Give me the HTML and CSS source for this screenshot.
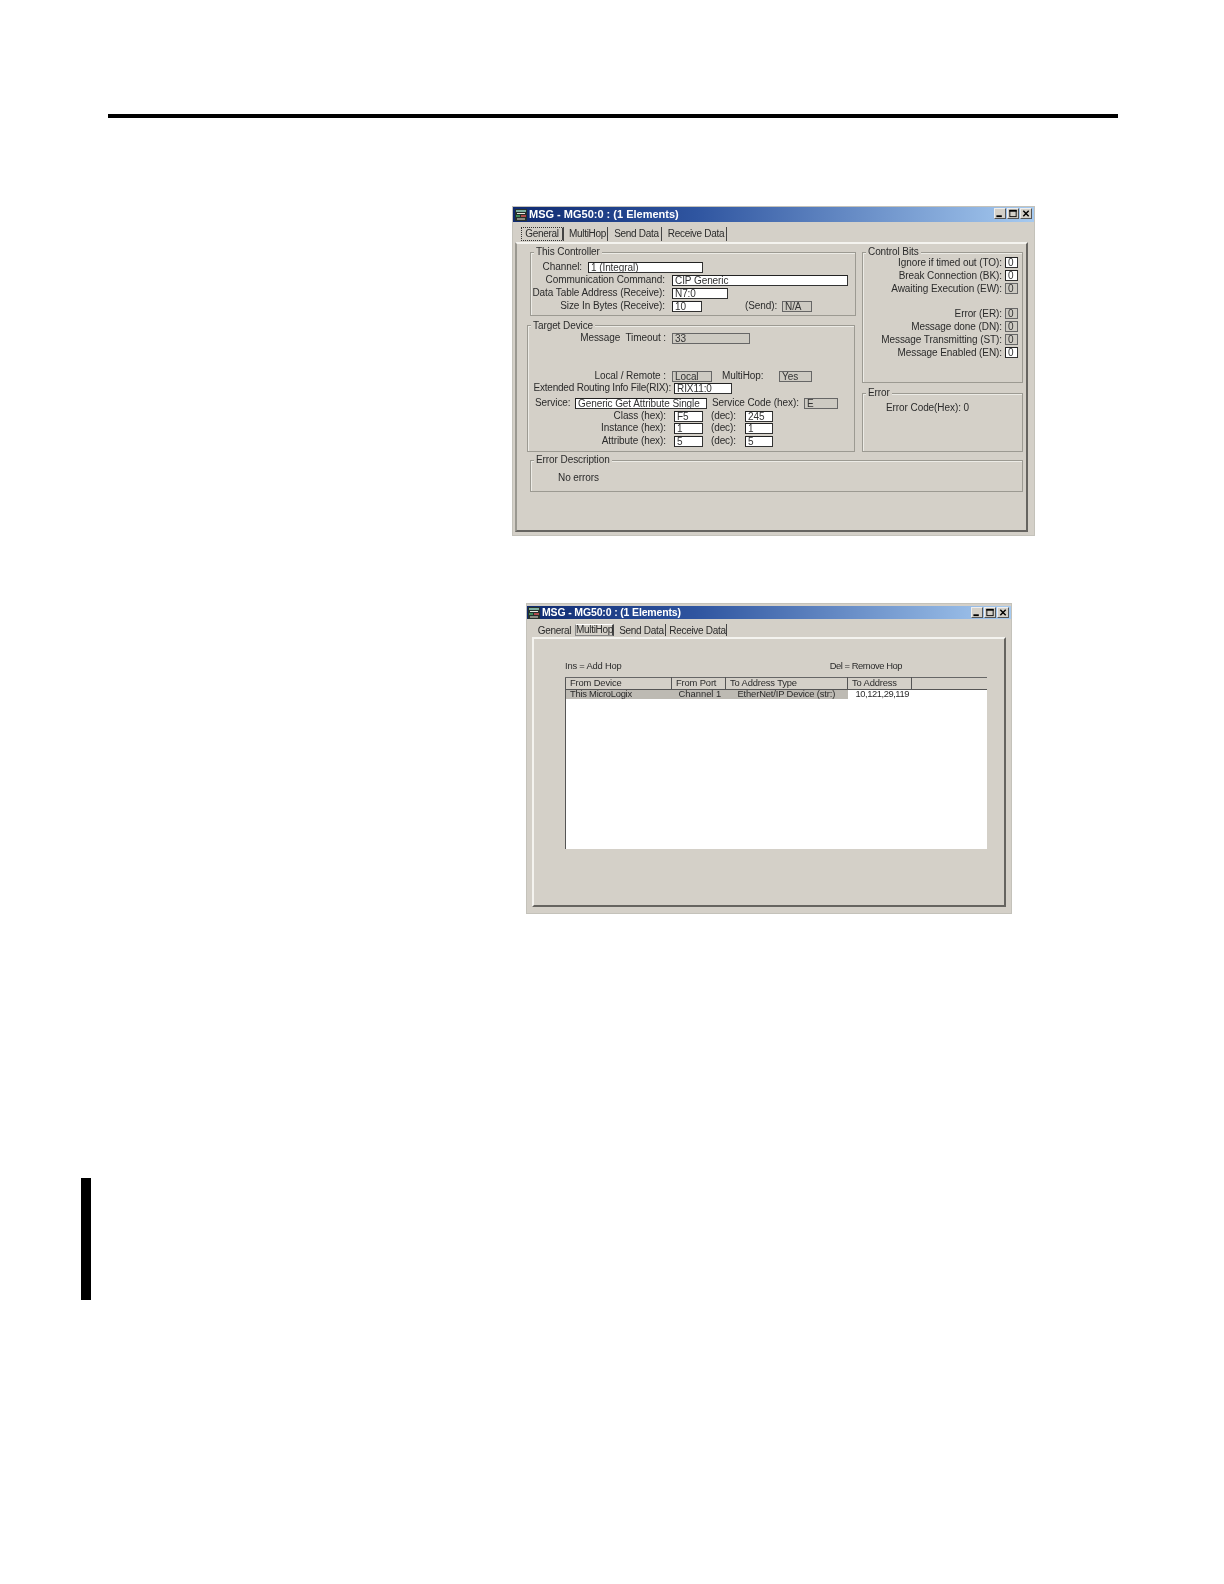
FILE: index.html
```html
<!DOCTYPE html>
<html lang="en">
<head>
<meta charset="utf-8">
<title>MSG - MG50:0</title>
<link rel="stylesheet" href="styles.css">
</head>
<body>
<div class="page">
  <div class="rule"></div>

  <section class="window win-general">
    <header class="titlebar">
      <svg class="app-icon" viewBox="0 0 12 12"><rect width="12" height="12" fill="#26302c"/><rect x="1" y="1" width="10" height="2" fill="#7fb0a0"/><rect x="2" y="4" width="8" height="1" fill="#e8e8e0"/><rect x="1" y="6" width="4" height="2" fill="#3f8a5a"/><rect x="6" y="6" width="5" height="2" fill="#b04a4a"/><rect x="2" y="9" width="8" height="2" fill="#8a8a80"/></svg>
      <span class="title-text">MSG - MG50:0 : (1 Elements)</span>
      <span class="controls">
        <span class="ctl"><svg viewBox="0 0 10 10"><rect x="1" y="7" width="6" height="2" fill="#000"/></svg></span>
        <span class="ctl"><svg viewBox="0 0 10 10"><rect x="1.5" y="1.5" width="7" height="7" fill="none" stroke="#000"/><rect x="1" y="1" width="8" height="2" fill="#000"/></svg></span>
        <span class="ctl ctl-close"><svg viewBox="0 0 10 10"><path d="M2 2l6 6M8 2l-6 6" stroke="#000" stroke-width="1.6" fill="none"/></svg></span>
      </span>
    </header>
    <nav class="tabs tabs-general">
      <span class="tab tab-focus t-gen">General</span>
      <span class="tab t-mh">MultiHop</span>
      <span class="tab t-send">Send Data</span>
      <span class="tab t-recv">Receive Data</span>
    </nav>
    <div class="panel panel-general">
      <div class="columns">
        <div class="col-left">
          <div class="group g-controller">
            <span class="legend">This Controller</span>
            <div class="row"><span class="lab w50 mr6">Channel:</span><span class="field f115">1 (Integral)</span></div>
            <div class="row"><span class="lab w133 mr7">Communication Command:</span><span class="field f176">CIP Generic</span></div>
            <div class="row"><span class="lab w133 mr7">Data Table Address (Receive):</span><span class="field f56">N7:0</span></div>
            <div class="row"><span class="lab w133 mr7">Size In Bytes (Receive):</span><span class="field f30">10</span><span class="lab w28 ml43">(Send):</span><span class="field off f30 ml9">N/A</span></div>
          </div>
          <div class="group g-target">
            <span class="legend">Target Device</span>
            <div class="row"><span class="lab w137 mr6">Message  Timeout :</span><span class="field off f78">33</span></div>
            <div class="row mt26"><span class="lab w137 mr6">Local / Remote :</span><span class="field off f40">Local</span><span class="lab w40 ml10">MultiHop:</span><span class="field off f33 ml17">Yes</span></div>
            <div class="row"><span class="lab w142 mr3 tight">Extended Routing Info File(RIX):</span><span class="field f58">RIX11:0</span></div>
            <div class="row mt3"><span class="lab w34 ml6 mr6">Service:</span><span class="field f132">Generic Get Attribute Single</span><span class="lab w86 ml5">Service Code (hex):</span><span class="field off f34 ml6">E</span></div>
            <div class="row mt1"><span class="lab w137 mr8">Class (hex):</span><span class="field f29">F5</span><span class="lab w28 ml5">(dec):</span><span class="field f28 ml9">245</span></div>
            <div class="row"><span class="lab w137 mr8">Instance (hex):</span><span class="field f29">1</span><span class="lab w28 ml5">(dec):</span><span class="field f28 ml9">1</span></div>
            <div class="row mt1"><span class="lab w137 mr8">Attribute (hex):</span><span class="field f29">5</span><span class="lab w28 ml5">(dec):</span><span class="field f28 ml9">5</span></div>
          </div>
        </div>
        <div class="col-right">
          <div class="group g-bits">
            <span class="legend">Control Bits</span>
            <div class="bit"><span>Ignore if timed out (TO):</span><span class="field f13">0</span></div>
            <div class="bit"><span>Break Connection (BK):</span><span class="field f13">0</span></div>
            <div class="bit"><span>Awaiting Execution (EW):</span><span class="field off f13">0</span></div>
            <div class="bit bit-gap"><span>Error (ER):</span><span class="field off f13">0</span></div>
            <div class="bit"><span>Message done (DN):</span><span class="field off f13">0</span></div>
            <div class="bit"><span>Message Transmitting (ST):</span><span class="field off f13">0</span></div>
            <div class="bit"><span>Message Enabled (EN):</span><span class="field f13">0</span></div>
          </div>
          <div class="group g-error">
            <span class="legend">Error</span>
            <p class="note note-code">Error Code(Hex): 0</p>
          </div>
        </div>
      </div>
      <div class="group g-desc">
        <span class="legend">Error Description</span>
        <p class="note note-desc">No errors</p>
      </div>
    </div>
  </section>

  <section class="window win-hop">
    <header class="titlebar">
      <svg class="app-icon" viewBox="0 0 12 12"><rect width="12" height="12" fill="#26302c"/><rect x="1" y="1" width="10" height="2" fill="#7fb0a0"/><rect x="2" y="4" width="8" height="1" fill="#e8e8e0"/><rect x="1" y="6" width="4" height="2" fill="#3f8a5a"/><rect x="6" y="6" width="5" height="2" fill="#b04a4a"/><rect x="2" y="9" width="8" height="2" fill="#8a8a80"/></svg>
      <span class="title-text">MSG - MG50:0 : (1 Elements)</span>
      <span class="controls">
        <span class="ctl"><svg viewBox="0 0 10 10"><rect x="1" y="7" width="6" height="2" fill="#000"/></svg></span>
        <span class="ctl"><svg viewBox="0 0 10 10"><rect x="1.5" y="1.5" width="7" height="7" fill="none" stroke="#000"/><rect x="1" y="1" width="8" height="2" fill="#000"/></svg></span>
        <span class="ctl ctl-close"><svg viewBox="0 0 10 10"><path d="M2 2l6 6M8 2l-6 6" stroke="#000" stroke-width="1.6" fill="none"/></svg></span>
      </span>
    </header>
    <nav class="tabs tabs-hop">
      <span class="tab h-gen">General</span>
      <span class="tab tab-raised h-mh">MultiHop</span>
      <span class="tab h-send">Send Data</span>
      <span class="tab h-recv">Receive Data</span>
    </nav>
    <div class="panel panel-hop">
      <div class="hints"><span class="hint-ins">Ins = Add Hop</span><span class="hint-del">Del = Remove Hop</span></div>
      <table class="hops">
        <colgroup><col class="c1"><col class="c2"><col class="c3"><col class="c4"><col></colgroup>
        <thead><tr><th>From Device</th><th>From Port</th><th>To Address Type</th><th>To Address</th><th></th></tr></thead>
        <tbody>
          <tr class="sel"><td>This MicroLogix</td><td class="port">Channel 1</td><td class="ctr">EtherNet/IP Device (str:)</td><td class="plain">10,121,29,119</td><td class="blank"></td></tr>
          <tr class="fill"><td colspan="5"></td></tr>
        </tbody>
      </table>
    </div>
  </section>

  <div class="change-bar"></div>
</div>
</body>
</html>
```
FILE: styles.css
```css
* { box-sizing: border-box; }
html, body { margin: 0; background: #fff; }
.page {
  position: relative;
  width: 1224px;
  height: 1584px;
  overflow: hidden;
  padding-top: 114px;
  font-family: "Liberation Sans", Arial, sans-serif;
  font-size: 10px;
  letter-spacing: -0.08px;
  color: #2b2b2b;
}
.rule { width: 1010px; height: 4px; margin-left: 108px; background: #000; }
.change-bar { position: absolute; left: 81px; top: 1178px; width: 10px; height: 122px; background: #000; }

.window {
  background: #d4d0c8;
  border: 1px solid #c4c2ba;
  filter: blur(0.4px);
}
.win-general { width: 523px; height: 330px; margin: 88px 0 0 512px; }
.win-hop { width: 486px; height: 311px; margin: 67px 0 0 526px; padding-top: 2px; }

.titlebar {
  display: flex;
  align-items: center;
  height: 15px;
  padding: 0 2px 0 2px;
  background: linear-gradient(90deg, #0f2a70 0%, #2f55a0 35%, #a6caf0 100%);
}
.win-hop .titlebar { height: 13px; padding-left: 1px; }
.app-icon { width: 12px; height: 12px; margin-right: 2px; flex: none; }
.title-text { padding-bottom: 2px; color: #fff; font-size: 11px; font-weight: 700; letter-spacing: 0; white-space: nowrap; }
.win-hop .title-text { font-size: 10.5px; letter-spacing: -0.15px; }
.controls { display: flex; gap: 1px; margin: -2px 0 0 auto; }
.win-hop .controls { margin-top: -1px; }
.ctl {
  display: block;
  width: 12px;
  height: 11px;
  background: #d4d0c8;
  border: 1px solid #eee;
  border-right-color: #555;
  border-bottom-color: #555;
}
.ctl svg { display: block; width: 100%; height: 100%; }

.tabs { display: flex; align-items: center; white-space: nowrap; }
.tabs-general { height: 14px; margin: 5px 0 1px 8px; }
.tabs-hop { height: 12px; margin: 5px 0 1px 10px; }
.tab { display: block; height: 100%; line-height: 13px; border-right: 1px solid #444; text-align: center; letter-spacing: -0.3px; }
.tab-focus { border: 1px dotted #333; border-right: 2px solid #444; line-height: 11px; }
.tab-raised { border: 1px solid #888; border-top-color: #fff; border-right: 2px solid #444; line-height: 10px; }
.t-gen { width: 43px; margin-right: 4px; }
.t-mh { width: 40px; margin-right: 4px; }
.t-send { width: 50px; margin-right: 4px; }
.t-recv { width: 61px; }
.h-gen { width: 35px; border-right: 0; margin-right: 3px; }
.h-mh { width: 39px; margin-right: 4px; }
.h-send { width: 48px; margin-right: 3px; }
.h-recv { width: 58px; }

.panel {
  border: 2px solid #f4f3ef;
  border-right-color: #666460;
  border-bottom-color: #666460;
}
.panel-general { width: 513px; height: 290px; margin-left: 2px; padding-top: 8px; border-left-color: #9a9890; }
.panel-hop { width: 474px; height: 270px; margin-left: 5px; padding: 20px 0 0 31px; }

.columns { display: flex; }
.col-left { width: 328px; margin-left: 10px; }
.col-right { width: 161px; margin-left: 7px; }

.group {
  position: relative;
  border: 1px solid #9c9a92;
  box-shadow: inset 1px 1px 0 #ecebe6;
}
.legend {
  position: absolute;
  top: -7px;
  left: 3px;
  padding: 0 2px;
  background: #d4d0c8;
  line-height: 11px;
  white-space: nowrap;
}
.g-controller { width: 326px; height: 64px; margin-left: 3px; padding: 8px 0 0 1px; }
.g-target { width: 328px; height: 127px; margin-top: 9px; padding: 6px 0 0 1px; }
.g-target .legend { top: -6px; }
.g-bits { height: 131px; padding: 3px 4px 0 0; }
.g-error { height: 59px; margin-top: 10px; }
.g-desc { width: 493px; height: 32px; margin: 8px 0 0 13px; }

.row { display: flex; align-items: center; height: 13px; white-space: pre; }
.g-target .row { height: 12px; }
.lab { flex: none; padding-bottom: 2px; text-align: right; white-space: pre; }
.g-target .lab { padding-bottom: 1px; }
.tight { letter-spacing: -0.2px; }
.bit { display: flex; justify-content: flex-end; align-items: center; gap: 3px; height: 13px; white-space: nowrap; }
.bit-gap { margin-top: 12px; }

.field {
  flex: none;
  display: block;
  height: 11px;
  padding-left: 2px;
  line-height: 10px;
  background: #fff;
  border: 1px solid #222;
  border-right-color: #333;
  border-bottom-color: #333;
  overflow: hidden;
  color: #333;
  white-space: nowrap;
}
.off { background: #cdcac2; border-color: #666; }

.w28 { width: 28px; } .w34 { width: 34px; } .w40 { width: 40px; } .w50 { width: 50px; } .w86 { width: 86px; }
.w133 { width: 133px; } .w137 { width: 137px; } .w142 { width: 142px; }
.f13 { width: 13px; } .f28 { width: 28px; } .f29 { width: 29px; } .f30 { width: 30px; } .f33 { width: 33px; }
.f34 { width: 34px; } .f40 { width: 40px; } .f56 { width: 56px; } .f58 { width: 58px; } .f78 { width: 78px; }
.f115 { width: 115px; } .f132 { width: 132px; } .f176 { width: 176px; }
.mr3 { margin-right: 3px; } .mr6 { margin-right: 6px; } .mr7 { margin-right: 7px; } .mr8 { margin-right: 8px; }
.ml5 { margin-left: 5px; } .ml6 { margin-left: 6px; } .ml9 { margin-left: 9px; } .ml10 { margin-left: 10px; } .ml17 { margin-left: 17px; } .ml43 { margin-left: 43px; }
.mt1 { margin-top: 1px; } .mt3 { margin-top: 3px; } .mt26 { margin-top: 26px; }

.note { margin: 0; }
.note-code { padding: 8px 0 0 23px; }
.note-desc { padding: 11px 0 0 27px; }

.hints { display: flex; height: 14px; line-height: 14px; width: 337px; justify-content: space-between; font-size: 9.4px; }
.hint-ins { letter-spacing: -0.2px; }
.hint-del { letter-spacing: -0.45px; }
.hops {
  width: 422px;
  height: 172px;
  margin-top: 4px;
  border-collapse: collapse;
  table-layout: fixed;
  background: #fff;
  box-shadow: inset 1px 1px 0 #444;
  font-size: 9.4px;
}
.c1 { width: 106px; } .c2 { width: 54px; } .c3 { width: 122px; } .c4 { width: 64px; }
.hops th {
  height: 11px;
  padding: 0 0 1px 4px;
  font-weight: 400;
  line-height: 10px;
  letter-spacing: -0.15px;
  text-align: left;
  background: #d4d0c8;
  border-top: 1px solid #666;
  border-right: 1px solid #555;
  border-bottom: 1px solid #555;
  white-space: nowrap;
}
.hops th:first-child { border-left: 1px solid #555; }
.hops th:last-child { border-right: 0; }
.hops td { height: 9px; padding: 0 0 0 4px; line-height: 8px; letter-spacing: -0.25px; white-space: nowrap; vertical-align: top; }
.sel td { background: #bdbab3; }
.sel td:first-child { border-left: 1px solid #555; }
.sel td.port { padding-left: 7px; letter-spacing: 0; }
.sel td.ctr { padding-left: 12px; letter-spacing: -0.15px; }
.sel td.plain { background: #fff; padding-left: 8px; letter-spacing: -0.45px; }
.sel td.blank { background: #fff; }
.fill td { height: auto; background: #fff; border-left: 1px solid #555; }
```
